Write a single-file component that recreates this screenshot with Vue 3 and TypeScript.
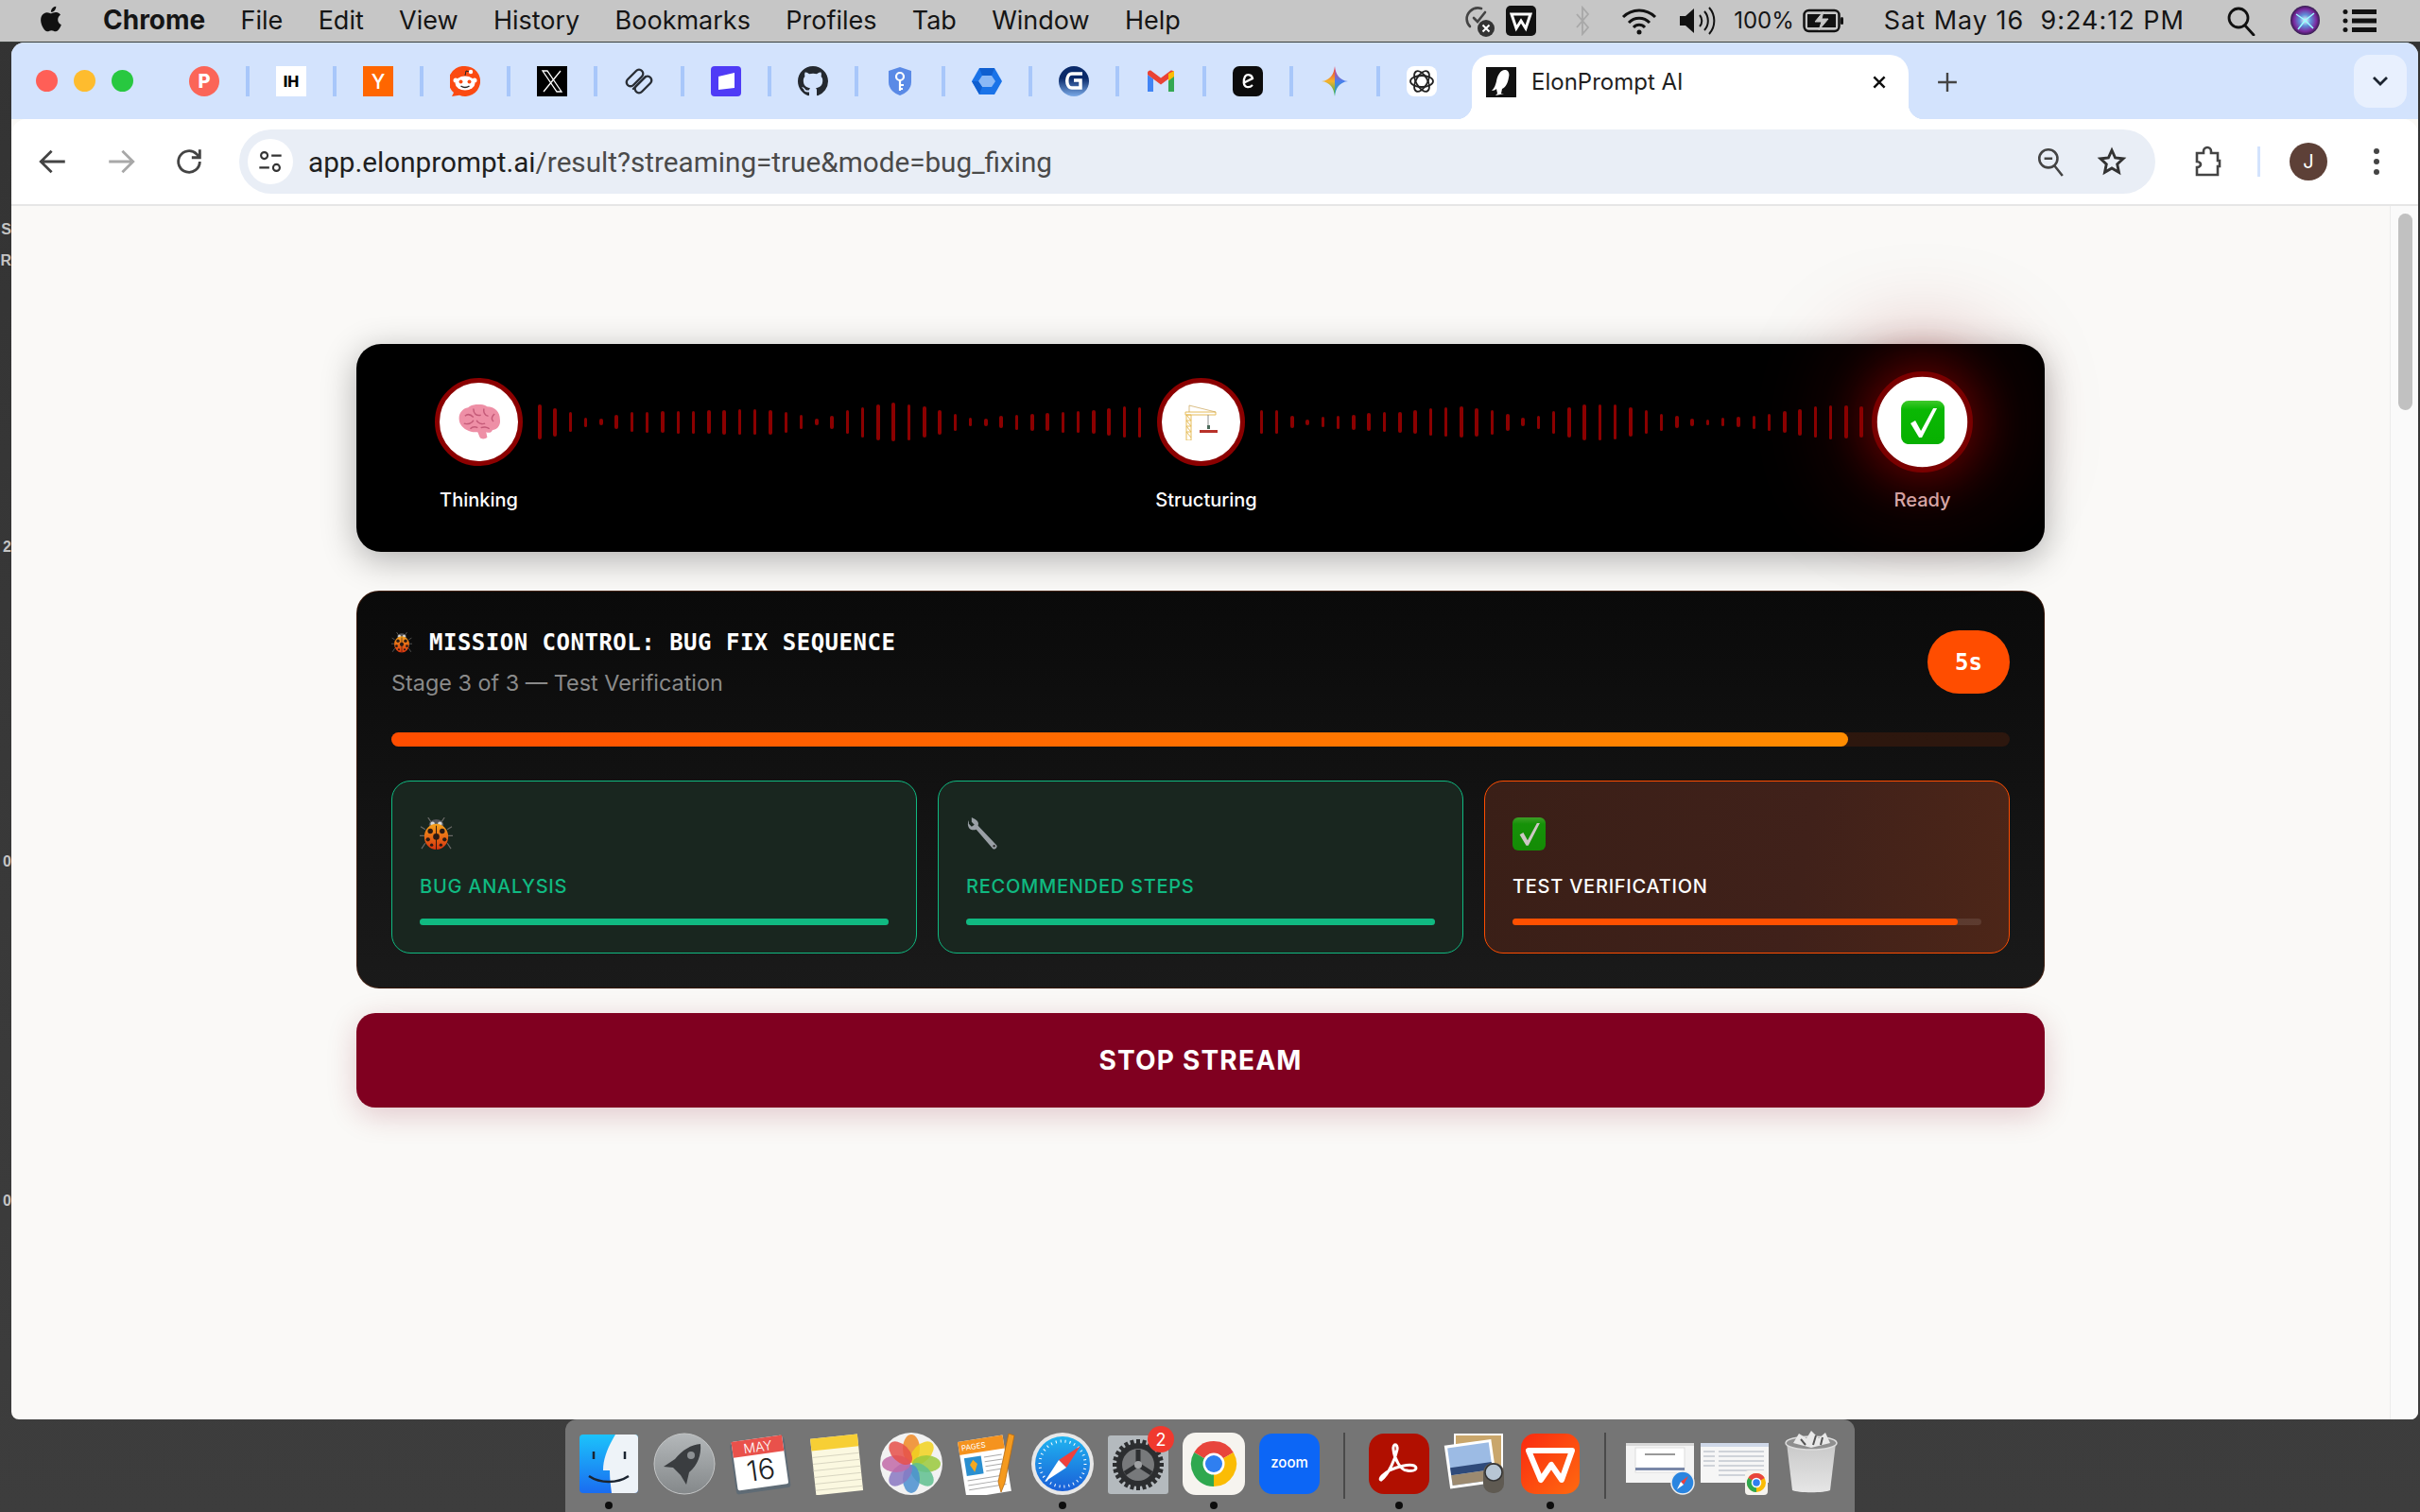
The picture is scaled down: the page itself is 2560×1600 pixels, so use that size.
<script setup lang="ts">
const menuItems = ['File', 'Edit', 'View', 'History', 'Bookmarks', 'Profiles', 'Tab', 'Window', 'Help'];

const waveOne = [37, 30, 21, 10, 7, 15, 21, 22, 23, 24, 24, 25, 26, 27, 27, 26, 22, 15, 7, 14, 25, 32, 38, 41, 38, 33, 26, 18, 9, 8, 13, 16, 18, 19, 22, 23, 25, 29, 33, 32];
const waveTwo = [25, 25, 13, 6, 11, 14, 16, 19, 21, 22, 25, 29, 31, 33, 30, 26, 18, 9, 14, 24, 32, 38, 38, 37, 31, 25, 18, 13, 8, 6, 9, 11, 14, 18, 23, 28, 33, 36, 35, 33];

const petals = [
  { deg: 0, fill: '#f08a24' },
  { deg: 45, fill: '#f2d21f' },
  { deg: 90, fill: '#9ac93c' },
  { deg: 135, fill: '#5fbf8f' },
  { deg: 180, fill: '#4a8fd0' },
  { deg: 225, fill: '#8a78c2' },
  { deg: 270, fill: '#c26aa8' },
  { deg: 315, fill: '#e6504a' },
];

const gearTicks = Array.from({ length: 24 }, (_, i) => i * 15);
</script>

<template>
  <div class="desktop">
    <svg class="sprite" aria-hidden="true">
      <defs>
        <linearGradient id="bugShell" x1="0" y1="0" x2="0" y2="1">
          <stop offset="0" stop-color="#f5a21c" />
          <stop offset="1" stop-color="#d8340f" />
        </linearGradient>
        <linearGradient id="checkFill" x1="0" y1="0" x2="0" y2="1">
          <stop offset="0" stop-color="#3fc92c" />
          <stop offset="0.2" stop-color="#0ab804" />
          <stop offset="1" stop-color="#07b000" />
        </linearGradient>
      </defs>
      <symbol id="bug" viewBox="0 0 36 36">
        <g stroke="#6a6a68" stroke-width="1.2" fill="none">
          <path d="M13 6 9 0M23 6l4-6M6 13l-5-3M30 13l5-3M5 20H0M31 20h5M6 28l-4 6M30 28l4 6" />
        </g>
        <ellipse cx="18" cy="8" rx="8" ry="6" fill="#55565a" />
        <circle cx="14" cy="7" r="2.300" fill="#d8d8d8" />
        <circle cx="22" cy="7" r="2.300" fill="#d8d8d8" />
        <ellipse cx="18" cy="21" rx="13" ry="14" fill="url(#bugShell)" />
        <path d="M18 9v26" stroke="#2a1a14" stroke-width="1" />
        <g fill="#2a1a14">
          <circle cx="11.500" cy="15" r="2.800" />
          <circle cx="24.500" cy="15" r="2.800" />
          <circle cx="18" cy="21" r="3.400" />
          <circle cx="9" cy="24" r="2.200" />
          <circle cx="27" cy="24" r="2.200" />
          <circle cx="13" cy="30" r="1.700" />
          <circle cx="23" cy="30" r="1.700" />
        </g>
      </symbol>
      <symbol id="check" viewBox="0 0 46 46">
        <rect x="0" y="0" width="46" height="46" rx="8" fill="url(#checkFill)" />
        <path d="M10 24l5-3 6 11L34 8h4L22 39h-3z" fill="#fff" />
      </symbol>
    </svg>

    <!-- bits of the window behind -->
    <span class="behind behind-s">S</span>
    <span class="behind behind-r">R</span>
    <span class="behind behind-2">2</span>
    <span class="behind behind-0a">0</span>
    <span class="behind behind-0b">0</span>

    <header class="menubar">
      <svg class="apple" viewBox="0 0 24 24"><path fill="#111" d="M18.71 19.5c-.83 1.24-1.71 2.45-3.05 2.47-1.34.03-1.77-.79-3.29-.79-1.53 0-2 .77-3.27.82-1.31.05-2.3-1.32-3.14-2.53C4.25 17 2.94 12.45 4.7 9.39c.87-1.52 2.43-2.48 4.12-2.51 1.28-.02 2.5.87 3.29.87.78 0 2.26-1.07 3.81-.91.65.03 2.47.26 3.64 1.98-.09.06-2.17 1.28-2.15 3.81.03 3.02 2.65 4.03 2.68 4.04-.03.07-.42 1.44-1.38 2.83M13 3.5c.73-.83 1.94-1.46 2.94-1.5.13 1.17-.34 2.35-1.04 3.19-.69.85-1.83 1.51-2.95 1.42-.15-1.15.41-2.35 1.05-3.11z" /></svg>
      <nav class="menu">
        <strong class="menu-app">Chrome</strong>
        <span v-for="item in menuItems" :key="item">{{ item }}</span>
      </nav>
      <div class="status">
        <svg class="st-check" viewBox="0 0 34 36" fill="none" stroke="#444" stroke-width="2.6">
          <path d="M19 5a12 12 0 0 0-12 3C2 13 3 20 7 24" stroke-linecap="round" />
          <path d="M11 15l4 4 8-10" stroke-linecap="round" />
          <circle cx="24" cy="26" r="9" fill="#333" stroke="none" />
          <path d="M20.500 22.500l7 7M27.500 22.500l-7 7" stroke="#fff" stroke-width="2" />
        </svg>
        <svg class="st-wps" viewBox="0 0 32 32">
          <rect width="32" height="32" rx="5" fill="#111" />
          <path d="M6 9h20l-5 15-5-8-5 8z" fill="none" stroke="#fff" stroke-width="3" />
        </svg>
        <svg class="st-bt" viewBox="0 0 18 32" fill="none" stroke="#a8a8a8" stroke-width="1.800"><path d="M3 9l12 14-6 7V2l6 7L3 23" /></svg>
        <svg class="st-wifi" viewBox="0 0 40 30" fill="none" stroke="#111" stroke-width="3">
          <path d="M3 11a24 24 0 0 1 34 0M9 17a15 15 0 0 1 22 0M14 22a8 8 0 0 1 12 0" />
          <circle cx="20" cy="27" r="2.500" fill="#111" stroke="none" />
        </svg>
        <svg class="st-vol" viewBox="0 0 41 32">
          <path d="M2 11h6l9-8v26l-9-8H2z" fill="#111" />
          <path d="M23 10a9 9 0 0 1 0 12M28 6a15 15 0 0 1 0 20M33 2a21 21 0 0 1 0 28" fill="none" stroke="#111" stroke-width="2" />
        </svg>
        <span class="st-pct">100%</span>
        <svg class="st-batt" viewBox="0 0 44 26">
          <rect x="1.500" y="2" width="37" height="22" rx="5" fill="none" stroke="#111" stroke-width="2.500" />
          <rect x="40" y="9" width="3" height="8" rx="1.500" fill="#111" />
          <path d="M5 6h30v14H5z" fill="#111" />
          <path d="M22 3 13 14h7l-3 9 10-12h-7z" fill="#c6c6c6" stroke="#c6c6c6" />
        </svg>
        <span class="st-date">Sat May 16&nbsp;&nbsp;9:24:12 PM</span>
        <svg class="st-search" viewBox="0 0 31 32" fill="none" stroke="#111" stroke-width="2.800">
          <circle cx="13" cy="13" r="10" />
          <path d="M20 21l9 10" stroke-linecap="round" />
        </svg>
        <svg class="st-siri" viewBox="0 0 31 31">
          <defs>
            <radialGradient id="siriBg" cx="0.5" cy="0.5" r="0.55">
              <stop offset="0" stop-color="#f1f7ff" />
              <stop offset="0.35" stop-color="#5f8fd8" />
              <stop offset="0.7" stop-color="#7a2aa0" />
              <stop offset="1" stop-color="#16162a" />
            </radialGradient>
          </defs>
          <circle cx="15.500" cy="15.500" r="15.500" fill="url(#siriBg)" />
          <path d="M15.500 15.500 6 9M15.500 15.500 25 8M15.500 15.500 8 25M15.500 15.500 24 24" stroke="#9ff" stroke-width="1.500" />
        </svg>
        <svg class="st-list" viewBox="0 0 36 26" fill="#111">
          <circle cx="3" cy="3.500" r="2.500" /><rect x="10" y="1" width="26" height="5" />
          <circle cx="3" cy="13" r="2.500" /><rect x="10" y="10.500" width="26" height="5" />
          <circle cx="3" cy="22.500" r="2.500" /><rect x="10" y="20" width="26" height="5" />
        </svg>
      </div>
    </header>

    <div class="window">
      <div class="tabstrip">
        <div class="lights">
          <i class="light red"></i>
          <i class="light yellow"></i>
          <i class="light green"></i>
        </div>
        <div class="pinned">
          <div class="fav">
            <svg viewBox="0 0 32 32"><circle cx="16" cy="16" r="16" fill="#fb6558" /><text x="16" y="23" class="fav-text" font-size="20" fill="#fff">P</text></svg>
          </div>
          <div class="fav">
            <svg viewBox="0 0 32 32"><rect width="32" height="32" fill="#fff" /><text x="16" y="22" class="fav-text" font-size="16" fill="#000">IH</text></svg>
          </div>
          <div class="fav">
            <svg viewBox="0 0 32 32"><rect width="32" height="32" fill="#ff6600" /><text x="16" y="24" class="fav-text fav-thin" font-size="21" fill="#fff">Y</text></svg>
          </div>
          <div class="fav">
            <svg viewBox="0 0 32 32">
              <path d="M16 0a16 16 0 1 1-6 30.800L2 32l2-4A16 16 0 0 1 16 0z" fill="#fb4a12" />
              <ellipse cx="16" cy="18" rx="10.500" ry="7.500" fill="#fff" />
              <circle cx="6" cy="15" r="2.500" fill="#fff" /><circle cx="26" cy="15" r="2.500" fill="#fff" />
              <circle cx="11.500" cy="16.500" r="2" fill="#fb4a12" /><circle cx="20.500" cy="16.500" r="2" fill="#fb4a12" />
              <path d="M11.500 21q4.500 3 9 0" stroke="#222" stroke-width="1.500" fill="none" />
              <path d="M16 10l1-5 4 1" stroke="#222" stroke-width="1" fill="none" /><circle cx="22" cy="6" r="2.200" fill="#fff" />
            </svg>
          </div>
          <div class="fav">
            <svg viewBox="0 0 32 32">
              <rect width="32" height="32" fill="#000" />
              <path d="M6 5h5l15 22h-5zM25 5 7 27" fill="none" stroke="#fff" stroke-width="1.300" />
            </svg>
          </div>
          <div class="fav">
            <svg viewBox="0 0 32 32" fill="none" stroke="#2a2f36" stroke-width="2.400" stroke-linecap="round">
              <path d="M4 14 13 5a4.200 4.200 0 0 1 6 6l-9 9a4 4 0 0 1-6-6zM10 24l13-13" />
              <path d="M28 18l-9 9a4.200 4.200 0 0 1-6-6l9-9a4 4 0 0 1 6 6z" />
            </svg>
          </div>
          <div class="fav">
            <svg viewBox="0 0 32 32"><rect width="32" height="32" rx="4" fill="#4f3bf6" /><path d="M8 11l17-4v16l-17 2z" fill="#fff" /></svg>
          </div>
          <div class="fav">
            <svg viewBox="0 0 16 16"><path fill="#24292f" d="M8 0C3.580 0 0 3.580 0 8c0 3.540 2.290 6.530 5.470 7.590.4.070.55-.17.55-.38 0-.19-.01-.82-.01-1.490-2.010.37-2.530-.49-2.690-.94-.09-.23-.48-.94-.82-1.130-.28-.15-.68-.52-.01-.53.63-.01 1.080.58 1.230.82.72 1.210 1.870.87 2.330.66.07-.52.28-.87.51-1.070-1.780-.2-3.640-.89-3.640-3.950 0-.87.31-1.590.82-2.150-.08-.2-.36-1.020.08-2.120 0 0 .67-.21 2.200.82.64-.18 1.320-.27 2-.27.68 0 1.360.09 2 .27 1.530-1.040 2.200-.82 2.200-.82.44 1.100.16 1.920.08 2.120.51.56.82 1.270.82 2.150 0 3.070-1.870 3.750-3.650 3.950.29.25.54.73.54 1.480 0 1.070-.01 1.930-.01 2.200 0 .21.15.46.55.38A8.013 8.013 0 0 0 16 8c0-4.420-3.580-8-8-8z" /></svg>
          </div>
          <div class="fav">
            <svg viewBox="0 0 32 32">
              <path d="M16 1l12 4v12c0 7-6 12-12 14C10 29 4 24 4 17V5z" fill="#5a8ae6" />
              <circle cx="16" cy="11" r="4" fill="none" stroke="#fff" stroke-width="2.200" />
              <path d="M16 15v11M16 20h4M16 24h3" stroke="#fff" stroke-width="2.200" />
            </svg>
          </div>
          <div class="fav">
            <svg viewBox="0 0 32 32">
              <path d="M8 2h16l8 14-8 14H8L0 16z" fill="#1a73e8" />
              <path d="M11 10h10l4 6-4 6H11l-4-6z" fill="#8ab8f6" />
              <path d="M8 2h16l-3 8H11zM0 16h7l4 6-3 8z" fill="#0f5fd0" />
            </svg>
          </div>
          <div class="fav">
            <svg viewBox="0 0 32 32">
              <defs>
                <linearGradient id="favG" x1="0" y1="0" x2="0" y2="1">
                  <stop offset="0.4" stop-color="#0a2a6a" />
                  <stop offset="1" stop-color="#7aaae8" />
                </linearGradient>
              </defs>
              <circle cx="16" cy="16" r="16" fill="url(#favG)" />
              <path d="M25 8H14c-7 0-7 15 0 15h9v-8h-7" fill="none" stroke="#fff" stroke-width="3.500" />
            </svg>
          </div>
          <div class="fav">
            <svg viewBox="0 0 32 32">
              <path d="M2 27V9l6 4.500V27z" fill="#4285f4" />
              <path d="M24 27V13.500L30 9v18z" fill="#34a853" />
              <path d="M2 9l14 10.500L30 9v-2c0-2-2.500-3-4-2L16 12.500 6 5C4.500 4 2 5 2 7z" fill="#ea4335" />
              <path d="M24 8l6-3v6l-6 4.500z" fill="#fbbc04" />
            </svg>
          </div>
          <div class="fav">
            <svg viewBox="0 0 32 32">
              <rect width="32" height="32" rx="7" fill="#0c0c0c" />
              <path d="M11 18 21 13a4.500 4.500 0 0 0-8-2c-2 4-2 10 2 11 2 .5 4 0 6-2" fill="none" stroke="#fff" stroke-width="2.300" />
            </svg>
          </div>
          <div class="fav">
            <svg viewBox="0 0 32 32">
              <defs>
                <linearGradient id="gemLeft" x1="0" y1="0" x2="0" y2="1">
                  <stop offset="0.1" stop-color="#e8453c" />
                  <stop offset="0.5" stop-color="#f6b32a" />
                  <stop offset="0.9" stop-color="#3fae5a" />
                </linearGradient>
                <linearGradient id="gemRight" x1="0" y1="0" x2="0" y2="1">
                  <stop offset="0.1" stop-color="#d8457c" />
                  <stop offset="0.5" stop-color="#4a7ff0" />
                  <stop offset="0.9" stop-color="#2fa89a" />
                </linearGradient>
              </defs>
              <path d="M16 0c-1 9-5 15-14 16 9 1 13 7 14 16z" fill="url(#gemLeft)" />
              <path d="M16 0c1 9 5 15 14 16-9 1-13 7-14 16z" fill="url(#gemRight)" />
            </svg>
          </div>
          <div class="fav fav-last">
            <svg viewBox="0 0 32 32">
              <rect width="32" height="32" rx="8" fill="#fff" />
              <g fill="none" stroke="#222" stroke-width="1.800">
                <ellipse cx="16" cy="16" rx="12" ry="6" />
                <ellipse cx="16" cy="16" rx="12" ry="6" transform="rotate(60 16 16)" />
                <ellipse cx="16" cy="16" rx="12" ry="6" transform="rotate(120 16 16)" />
              </g>
            </svg>
          </div>
        </div>

        <div class="tab">
          <svg class="tab-icon" viewBox="0 0 32 32">
            <rect width="32" height="32" fill="#111" />
            <path d="M21 3c3 1 4 4 3 8-1 6-3 10-7 12l-1 5h3l-4 1-5 1 2-2-1-5c-1 1-3 2-5 2 3-3 4-6 5-10 1-7 5-13 10-12z" fill="#fff" />
          </svg>
          <span class="tab-title">ElonPrompt AI</span>
          <svg class="tab-close" viewBox="0 0 16 16" fill="none" stroke="#111" stroke-width="2.200"><path d="M3 3l10 10M13 3 3 13" /></svg>
        </div>
        <svg class="tab-new" viewBox="0 0 20 20" fill="none" stroke="#444" stroke-width="2.200"><path d="M10 1v18M1 10h18" /></svg>
        <div class="tab-search">
          <svg viewBox="0 0 18 12" fill="none" stroke="#1c2430" stroke-width="2.800"><path d="M2 2l7 7 7-7" /></svg>
        </div>
      </div>

      <div class="toolbar">
        <div class="nav-btn">
          <svg viewBox="0 0 24 24" fill="none" stroke="#444" stroke-width="2"><path d="M21 12H4M11 4l-8 8 8 8" /></svg>
        </div>
        <div class="nav-btn">
          <svg viewBox="0 0 24 24" fill="none" stroke="#a8a8a8" stroke-width="2"><path d="M3 12h17M13 4l8 8-8 8" /></svg>
        </div>
        <div class="nav-btn">
          <svg viewBox="0 0 24 24" fill="none" stroke="#444" stroke-width="2"><path d="M20 12a8 8 0 1 1-2.400-5.700L20 9M20 3v6h-6" /></svg>
        </div>
        <div class="omnibox">
          <div class="tune">
            <svg viewBox="0 0 24 24" fill="none" stroke="#333" stroke-width="1.800">
              <circle cx="6.500" cy="6.500" r="3" /><path d="M13 6.500h9M2 17.500h9" /><circle cx="17.500" cy="17.500" r="3" />
            </svg>
          </div>
          <span class="url"><span class="url-host">app.elonprompt.ai</span>/result?streaming=true&amp;mode=bug_fixing</span>
          <svg class="omni-zoom" viewBox="0 0 28 30" fill="none" stroke="#444" stroke-width="2.400">
            <circle cx="12" cy="12" r="9" /><path d="M8 12h8M18 19l8 10" />
          </svg>
          <svg class="omni-star" viewBox="0 0 24 24" fill="none" stroke="#333" stroke-width="2.200"><path d="M12 3l2.700 6 6.300.7-4.700 4.300 1.300 6.500L12 17.200 6.400 20.500 7.700 14 3 9.700 9.300 9z" /></svg>
        </div>
        <svg class="ext" viewBox="0 0 30 34" fill="none" stroke="#444" stroke-width="2.600">
          <path d="M4 8h7V6a4 4 0 0 1 8 0v2h7v8h2v6h-2v9H4v-8c3 0 4-2 4-3s-1-3-4-3z" />
        </svg>
        <i class="tool-sep"></i>
        <div class="avatar">J</div>
        <div class="kebab"><i></i><i></i><i></i></div>
      </div>

      <div class="viewport">
        <main class="page">
          <section class="stepper">
            <div class="step">
              <div class="step-circle">
                <svg class="brain" viewBox="0 0 41 33">
                  <path d="M3 19C-1 12 3 4 10 3c4-4 14-4 18-1 7 0 12 5 12 12 1 6-3 10-7 10-1 3-4 3-6 2l1 5c-2 2-6 2-7 0l-2-5c-6 1-13-2-16-7z" fill="#ee8fa6" />
                  <path d="M7 11c3-3 6-1 8 1M15 4c0 5 3 7 7 6M25 4c-1 3 1 7 4 7M35 9c-2 1-4 5-1 7M6 18c3 1 8 0 9-3M18 15c1 3 5 4 8 3M30 23c-2-2-6-2-8-1M12 23c2-2 5-2 7-1" fill="none" stroke="#c45a78" stroke-width="1.300" />
                </svg>
              </div>
              <span class="step-label">Thinking</span>
            </div>
            <div class="wave"><i v-for="(h, i) in waveOne" :key="i" :style="{ height: `${h}px` }"></i></div>
            <div class="step">
              <div class="step-circle">
                <svg class="crane" viewBox="0 0 36 38">
                  <g fill="none" stroke="#e6bc58" stroke-width="1">
                    <path d="M2 8h32v3H2zM3 11v27h5V11zM3 17h5M3 23h5M3 29h5M3 11l5 6M3 17l5 6M3 23l5 6M3 29l5 6" />
                    <path d="M6 1v7M6 1l28 7" stroke="#c8a050" stroke-width="0.700" />
                  </g>
                  <path d="M26 11v14" stroke="#777" stroke-width="0.800" />
                  <rect x="25" y="22" width="3" height="4" fill="#4a6a5a" />
                  <rect x="17" y="27" width="19" height="3" fill="#b8322a" />
                </svg>
              </div>
              <span class="step-label step-label-shift">Structuring</span>
            </div>
            <div class="wave"><i v-for="(h, i) in waveTwo" :key="i" :style="{ height: `${h}px` }"></i></div>
            <div class="step">
              <div class="step-circle step-circle-active">
                <svg class="ready-check"><use href="#check" /></svg>
              </div>
              <span class="step-label step-label-ready">Ready</span>
            </div>
          </section>

          <section class="mission">
            <div class="mission-head">
              <div>
                <h1 class="mission-title"><svg class="title-bug"><use href="#bug" /></svg>MISSION CONTROL: BUG FIX SEQUENCE</h1>
                <p class="mission-sub">Stage 3 of 3 — Test Verification</p>
              </div>
              <div class="timer">5s</div>
            </div>
            <div class="progress"><div class="progress-fill" :style="{ width: '90%' }"></div></div>
            <div class="cards">
              <div class="card">
                <svg class="card-icon"><use href="#bug" /></svg>
                <div class="card-label">BUG ANALYSIS</div>
                <div class="card-track"><div class="card-fill" :style="{ width: '100%' }"></div></div>
              </div>
              <div class="card">
                <svg class="card-icon" viewBox="0 0 36 36">
                  <path d="M3 3c-2 4-1 8 2 10 2 1 4 1 6 0l18 21c2 2 6-2 4-4L13 9c1-3 0-5-3-7L6 0v5l3 3-3 2-3-3z" fill="#9aa0a6" />
                  <circle cx="30.500" cy="31" r="1.300" fill="#333" />
                </svg>
                <div class="card-label">RECOMMENDED STEPS</div>
                <div class="card-track"><div class="card-fill" :style="{ width: '100%' }"></div></div>
              </div>
              <div class="card card-active">
                <svg class="card-icon card-icon-dim"><use href="#check" /></svg>
                <div class="card-label">TEST VERIFICATION</div>
                <div class="card-track"><div class="card-fill" :style="{ width: '95%' }"></div></div>
              </div>
            </div>
          </section>

          <button class="stop" type="button">STOP STREAM</button>
        </main>
        <div class="scrollbar"><div class="scroll-thumb"></div></div>
      </div>
    </div>

    <footer class="dock">
      <div class="dock-item">
        <svg viewBox="0 0 66 66">
          <defs>
            <linearGradient id="finderBlue" x1="0" y1="0" x2="0" y2="1">
              <stop offset="0" stop-color="#1cc3fb" />
              <stop offset="1" stop-color="#1a6cf0" />
            </linearGradient>
          </defs>
          <rect x="2" y="2" width="62" height="62" rx="4" fill="url(#finderBlue)" />
          <path d="M40 2h20a4 4 0 0 1 4 4v54a4 4 0 0 1-4 4H36c-1-8-2-15-2-24h-7c0-14 6-26 13-38z" fill="#eef3f8" />
          <path d="M17 20v8M50 20v8" stroke="#1b2430" stroke-width="2.500" />
          <path d="M12 46c12 8 30 8 42 0" fill="none" stroke="#1b2430" stroke-width="2.500" />
        </svg>
        <i class="dot"></i>
      </div>
      <div class="dock-item">
        <svg viewBox="0 0 66 66">
          <defs>
            <linearGradient id="rocketBg" x1="0" y1="0" x2="0" y2="1">
              <stop offset="0" stop-color="#b4b8ba" />
              <stop offset="1" stop-color="#84888a" />
            </linearGradient>
          </defs>
          <circle cx="33" cy="33" r="32" fill="url(#rocketBg)" stroke="#c4c6c7" />
          <path d="M50 12c1 12-3 22-12 30l-3 13-6-10-8-8-10-1 12-8c8-10 17-15 27-16z" fill="#3a3d40" />
          <circle cx="40" cy="24" r="4" fill="#8c9093" />
        </svg>
        <i class="dot dot-off"></i>
      </div>
      <div class="dock-item">
        <svg viewBox="0 0 66 66">
          <g transform="rotate(-8 33 33)">
            <rect x="4" y="8" width="58" height="54" rx="3" fill="#5f6b75" />
            <rect x="6" y="6" width="54" height="52" rx="2" fill="#fff" />
            <rect x="6" y="6" width="54" height="17" fill="#e9514b" />
            <text x="33" y="20" class="dock-text dock-light" font-size="14" fill="#fff">MAY</text>
            <text x="33" y="50" class="dock-text dock-light" font-size="30" fill="#222">16</text>
          </g>
        </svg>
        <i class="dot dot-off"></i>
      </div>
      <div class="dock-item">
        <svg viewBox="0 0 66 66">
          <g transform="rotate(-6 33 33)">
            <rect x="9" y="4" width="50" height="60" fill="#fbf8e0" />
            <rect x="9" y="4" width="50" height="13" fill="#f7cf35" />
            <path d="M9 24h50M9 31h50M9 38h50M9 45h50M9 52h50M9 59h50" stroke="#d8d5c0" stroke-width="1" />
          </g>
        </svg>
        <i class="dot dot-off"></i>
      </div>
      <div class="dock-item">
        <svg viewBox="0 0 66 66">
          <circle cx="33" cy="33" r="33" fill="#f2f2f2" />
          <ellipse v-for="p in petals" :key="p.deg" cx="33" cy="17" rx="9" ry="15" :fill="p.fill" opacity="0.85" :transform="`rotate(${p.deg} 33 33)`" />
        </svg>
        <i class="dot dot-off"></i>
      </div>
      <div class="dock-item">
        <svg viewBox="0 0 66 66">
          <g transform="rotate(-9 30 33)">
            <rect x="6" y="6" width="48" height="60" fill="#fff" />
            <rect x="6" y="6" width="48" height="14" fill="#f5931e" />
            <text x="9" y="16" font-size="8" fill="#fff" class="dock-plain">PAGES</text>
            <rect x="10" y="24" width="18" height="19" fill="#2a8fd0" />
            <path d="M19 27l4 5-4 8-4-8z" fill="#f5a81e" />
            <path d="M31 26h19M31 31h19M31 36h19M31 41h19M10 48h40M10 53h40M10 58h40" stroke="#aaa" stroke-width="1" />
          </g>
          <path d="M56 1l6 2-10 50-4 10-3-11z" fill="#f59a1e" stroke="#b56a10" stroke-width="0.800" />
        </svg>
        <i class="dot dot-off"></i>
      </div>
      <div class="dock-item">
        <svg viewBox="0 0 66 66">
          <defs>
            <linearGradient id="safBlue" x1="0" y1="0" x2="0" y2="1">
              <stop offset="0" stop-color="#20b4f0" />
              <stop offset="1" stop-color="#1a5fd8" />
            </linearGradient>
          </defs>
          <circle cx="33" cy="33" r="33" fill="#e8e8e8" />
          <circle cx="33" cy="33" r="29" fill="url(#safBlue)" />
          <circle cx="33" cy="33" r="24" fill="none" stroke="#fff" stroke-width="3" stroke-dasharray="1 4" />
          <path d="M52 14 37 37 29 29z" fill="#f0403c" />
          <path d="M14 52 29 29 37 37z" fill="#fff" />
        </svg>
        <i class="dot"></i>
      </div>
      <div class="dock-item">
        <svg viewBox="0 0 66 66">
          <rect x="1" y="3" width="64" height="62" rx="3" fill="#b4babe" />
          <circle cx="33" cy="34" r="23" fill="#2c2e30" />
          <rect v-for="d in gearTicks" :key="d" x="31" y="7" width="4" height="7" fill="#2c2e30" :transform="`rotate(${d} 33 34)`" />
          <circle cx="33" cy="34" r="17" fill="#77797b" />
          <path d="M33 34V18M33 34 19 43M33 34l14 9" stroke="#2c2e30" stroke-width="5" />
          <circle cx="33" cy="34" r="4" fill="#a0a2a4" />
        </svg>
        <span class="dock-badge">2</span>
        <i class="dot dot-off"></i>
      </div>
      <div class="dock-item">
        <svg viewBox="0 0 66 66">
          <rect x="0" y="0" width="66" height="66" rx="14" fill="#f6f4ef" />
          <path d="M33 33 12.200 21A24 24 0 0 1 53.800 21z" fill="#e8453c" />
          <path d="M33 33 53.800 21A24 24 0 0 1 33 57z" fill="#fbbc04" />
          <path d="M33 33V57A24 24 0 0 1 12.200 21z" fill="#2fa84f" />
          <circle cx="33" cy="33" r="11.500" fill="#fff" />
          <circle cx="33" cy="33" r="9" fill="#2f7ff0" />
        </svg>
        <i class="dot"></i>
      </div>
      <div class="dock-item">
        <svg viewBox="0 0 66 66">
          <rect x="1" y="1" width="64" height="64" rx="14" fill="#0c66f6" />
          <text x="33" y="37" class="dock-text" font-size="15" fill="#fff">zoom</text>
        </svg>
        <i class="dot dot-off"></i>
      </div>
      <i class="dock-sep"></i>
      <div class="dock-item">
        <svg viewBox="0 0 66 66">
          <rect x="1" y="1" width="64" height="64" rx="16" fill="#b10f00" />
          <path d="M14 50c8-6 15-22 17-32 1-7-5-7-4 0 1 10 8 22 14 22 8 2 13-2 8-5-6-2-18 1-26 5-6 3-12 9-9 10z" fill="none" stroke="#fff" stroke-width="3" />
        </svg>
        <i class="dot"></i>
      </div>
      <div class="dock-item">
        <svg viewBox="0 0 66 66">
          <rect x="12" y="2" width="50" height="44" fill="#c9a66b" stroke="#fff" stroke-width="2" />
          <g transform="rotate(-8 30 35)">
            <rect x="4" y="10" width="50" height="46" fill="#fff" />
            <rect x="7" y="13" width="44" height="40" fill="#9cbbe4" />
            <path d="M7 34h44v8H7z" fill="#2f4a7a" />
            <path d="M7 42h44v11H7z" fill="#9c8a70" />
          </g>
          <rect x="42" y="32" width="22" height="32" rx="10" fill="#5f5a52" />
          <circle cx="53" cy="42" r="9" fill="#b7c6d4" stroke="#333" stroke-width="1.500" />
        </svg>
        <i class="dot dot-off"></i>
      </div>
      <div class="dock-item">
        <svg viewBox="0 0 66 66">
          <defs>
            <linearGradient id="wpsRed" x1="0" y1="0" x2="1" y2="1">
              <stop offset="0" stop-color="#fa2a10" />
              <stop offset="1" stop-color="#ff6a10" />
            </linearGradient>
          </defs>
          <rect x="2" y="1" width="62" height="64" rx="15" fill="url(#wpsRed)" />
          <path d="M10 19h46L45 50 34 34 23 50z" fill="none" stroke="#fff" stroke-width="6" stroke-linejoin="round" />
        </svg>
        <i class="dot"></i>
      </div>
      <i class="dock-sep"></i>
      <div class="dock-item">
        <svg class="wide" viewBox="0 0 80 66">
          <rect x="4" y="11" width="72" height="42" fill="#f4f4f4" />
          <rect x="4" y="11" width="72" height="3" fill="#d8d8d8" />
          <rect x="14" y="16" width="52" height="26" fill="#fff" stroke="#ddd" />
          <rect x="24" y="22" width="32" height="2" fill="#999" />
          <rect x="14" y="37" width="52" height="3" fill="#7a88a8" />
          <circle cx="64" cy="53" r="12" fill="#2a85e0" stroke="#eee" stroke-width="1.500" />
          <path d="M70 46l-5 9-3-3z" fill="#f0403c" /><path d="M58 60l4-8 3 3z" fill="#fff" />
        </svg>
        <i class="dot dot-off"></i>
      </div>
      <div class="dock-item">
        <svg class="wide" viewBox="0 0 80 66">
          <rect x="3" y="11" width="72" height="42" fill="#f6f6f6" />
          <rect x="3" y="11" width="72" height="4" fill="#cfd8e8" />
          <path d="M6 20h12M6 25h12M6 30h12M6 35h12M22 20h48M22 25h48M22 30h48M22 35h48M22 40h48M22 45h48" stroke="#a8b0bc" stroke-width="1.200" />
          <rect x="50" y="40" width="24" height="26" rx="4" fill="#f6f4ef" />
          <circle cx="62" cy="53" r="10" fill="#fbbc04" />
          <path d="M62 53 53.300 48A10 10 0 0 1 70.700 48z" fill="#e8453c" />
          <path d="M62 53v10A10 10 0 0 1 53.300 48z" fill="#2fa84f" />
          <circle cx="62" cy="53" r="4.500" fill="#2f7ff0" stroke="#fff" stroke-width="1.500" />
        </svg>
        <i class="dot dot-off"></i>
      </div>
      <div class="dock-item dock-trash">
        <svg viewBox="0 0 66 70">
          <defs>
            <linearGradient id="trashBody" x1="0" y1="0" x2="0" y2="1">
              <stop offset="0" stop-color="#c8c8c8" />
              <stop offset="1" stop-color="#e6e6e6" />
            </linearGradient>
          </defs>
          <path d="M7 16h52l-6 50c-6 3-34 3-40 0z" fill="url(#trashBody)" />
          <ellipse cx="33" cy="16" rx="27" ry="7" fill="#8f8f8f" stroke="#ddd" stroke-width="1.500" />
          <path d="M14 16l6-10 8 5 5-8 8 8 7-6 5 11-20 5z" fill="#e8e8e8" />
          <path d="M22 12l5 6M38 8l-3 10M45 10l-2 8" stroke="#555" stroke-width="2" />
        </svg>
      </div>
    </footer>
  </div>
</template>

<style>
html,
body {
  margin: 0;
  background: #3c3c3c;
}
</style>

<style scoped>
.desktop {
  position: relative;
  width: 2560px;
  height: 1600px;
  display: flex;
  flex-direction: column;
  overflow: hidden;
  background: linear-gradient(180deg, #333 0%, #3d3d3d 100%);
  font-family: Inter, "Liberation Sans", sans-serif;
}

.sprite {
  position: absolute;
  width: 0;
  height: 0;
}

.behind {
  position: absolute;
  left: 0;
  width: 12px;
  text-align: right;
  font: 700 16px/22px "Liberation Sans", sans-serif;
  color: #c4c4c4;
}
.behind-s { top: 232px; }
.behind-r { top: 265px; }
.behind-2 { top: 568px; }
.behind-0a { top: 901px; }
.behind-0b { top: 1260px; }

/* menu bar */
.menubar {
  flex: none;
  height: 45px;
  box-sizing: border-box;
  padding: 0 46px 1px 38px;
  display: flex;
  align-items: center;
  background: #c6c6c6;
  border-bottom: 1px solid #3a3f3c;
  color: #151515;
  font-size: 27px;
}

.apple {
  width: 32px;
  height: 34px;
  margin-top: -4px;
}

.menu {
  display: flex;
  gap: 37.300px;
  margin-left: 39px;
}

.menu-app {
  font-size: 28px;
  line-height: 32px;
  font-weight: 700;
}

.status {
  margin-left: auto;
  display: flex;
  align-items: center;
}

.st-check { width: 34px; height: 36px; }
.st-wps { width: 32px; height: 32px; margin-left: 11px; }
.st-bt { width: 18px; height: 32px; margin-left: 40px; }
.st-wifi { width: 40px; height: 30px; margin-left: 31px; }
.st-vol { width: 41px; height: 32px; margin-left: 21px; }
.st-pct { margin-left: 18px; font-size: 24px; }
.st-batt { width: 44px; height: 26px; margin-left: 9px; }
.st-date { margin-left: 42px; letter-spacing: 1px; }
.st-search { width: 31px; height: 32px; margin-left: 44px; }
.st-siri { width: 31px; height: 31px; margin-left: 37px; }
.st-list { width: 36px; height: 26px; margin-left: 24px; }

/* browser window */
.window {
  flex: none;
  height: 1457px;
  margin: 0 2px 0 12px;
  display: flex;
  flex-direction: column;
  border-radius: 14px 14px 8px 8px;
  overflow: hidden;
  background: #faf9f7;
}

.tabstrip {
  flex: none;
  height: 81px;
  display: flex;
  align-items: flex-start;
  padding-top: 13px;
  box-sizing: border-box;
  background: #d3e3fd;
}

.lights {
  display: flex;
  gap: 17px;
  margin: 16px 0 0 26px;
}

.light {
  width: 23px;
  height: 23px;
  border-radius: 50%;
}
.light.red { background: #ff5f57; }
.light.yellow { background: #febc2e; }
.light.green { background: #28c840; }

.pinned {
  display: flex;
  margin: 12px 0 0 31px;
}

.fav {
  width: 92px;
  height: 32px;
  box-sizing: border-box;
  display: flex;
  justify-content: center;
  border-right: 4px solid #a8c7fa;
}

.fav svg {
  width: 32px;
  height: 32px;
  display: block;
}

.fav-last {
  border-right-color: transparent;
}

.fav-text {
  font-family: Inter, sans-serif;
  font-weight: 800;
  text-anchor: middle;
}

.fav-thin {
  font-weight: 500;
}

.tab {
  position: relative;
  flex: none;
  width: 462px;
  height: 68px;
  margin-left: 5px;
  box-sizing: border-box;
  padding-left: 15px;
  display: flex;
  align-items: center;
  background: #fff;
  border-radius: 20px 20px 0 0;
}

.tab::before,
.tab::after {
  content: "";
  position: absolute;
  bottom: 0;
  width: 16px;
  height: 16px;
}

.tab::before {
  left: -16px;
  background: radial-gradient(circle at 0 0, transparent 16px, #fff 16.500px);
}

.tab::after {
  right: -16px;
  background: radial-gradient(circle at 100% 0, transparent 16px, #fff 16.500px);
}

.tab-icon {
  width: 32px;
  height: 32px;
  margin-top: -10px;
}

.tab-title {
  margin: -12px 0 0 16px;
  font-size: 24px;
  color: #1f1f1f;
}

.tab-close {
  width: 18px;
  height: 18px;
  margin: -10px 22px 0 auto;
}

.tab-new {
  width: 22px;
  height: 22px;
  margin: 18px 0 0 30px;
}

.tab-search {
  width: 56px;
  height: 56px;
  margin-left: auto;
  margin-right: 12px;
  border-radius: 16px;
  background: #e8f0fe;
  display: flex;
  align-items: center;
  justify-content: center;
}

.tab-search svg {
  width: 18px;
  height: 12px;
}

.toolbar {
  flex: none;
  height: 92px;
  box-sizing: border-box;
  padding-left: 8px;
  display: flex;
  align-items: center;
  background: #fff;
  border-bottom: 2px solid #e6e6e6;
  border-radius: 16px 16px 0 0;
}

.nav-btn {
  width: 72px;
  display: flex;
  justify-content: center;
}

.nav-btn svg {
  width: 34px;
  height: 34px;
}

.omnibox {
  flex: none;
  width: 2027px;
  height: 68px;
  margin-left: 17px;
  box-sizing: border-box;
  padding: 0 30px 0 9px;
  display: flex;
  align-items: center;
  background: #e9eef6;
  border-radius: 34px;
}

.tune {
  width: 48px;
  height: 48px;
  border-radius: 50%;
  background: #fff;
  display: flex;
  align-items: center;
  justify-content: center;
}

.tune svg {
  width: 28px;
  height: 28px;
}

.url {
  margin-left: 16px;
  font-family: Roboto, sans-serif;
  font-size: 29.700px;
  color: #4a4a4a;
}

.url-host {
  color: #1f1f1f;
}

.omni-zoom {
  width: 30px;
  height: 32px;
  margin-left: auto;
}

.omni-star {
  width: 32px;
  height: 32px;
  margin-left: 34px;
}

.ext {
  width: 30px;
  height: 34px;
  margin-left: 40px;
}

.tool-sep {
  width: 3px;
  height: 32px;
  margin-left: 38px;
  background: #d3e3fd;
}

.avatar {
  width: 40px;
  height: 40px;
  margin-left: 31px;
  border-radius: 50%;
  background: #5d4037;
  color: #fff;
  font-size: 20px;
  display: flex;
  align-items: center;
  justify-content: center;
}

.kebab {
  margin-left: 49px;
  display: flex;
  flex-direction: column;
  gap: 5px;
}

.kebab i {
  width: 6px;
  height: 6px;
  border-radius: 50%;
  background: #444;
}

.viewport {
  flex: 1;
  min-height: 0;
  display: flex;
}

.page {
  flex: 1;
  min-width: 0;
  box-sizing: border-box;
  padding-top: 146px;
  display: flex;
  flex-direction: column;
  align-items: center;
}

.scrollbar {
  flex: none;
  width: 30px;
  box-sizing: border-box;
  padding: 8px 6px 0 8px;
  background: #fafafa;
  border-left: 1px solid #ececec;
}

.scroll-thumb {
  height: 208px;
  border-radius: 8px;
  background: #c1c1c1;
}

/* stepper */
.stepper {
  width: 1786px;
  height: 220px;
  flex: none;
  box-sizing: border-box;
  padding: 36px 83px 0;
  display: flex;
  align-items: flex-start;
  background: #000;
  border-radius: 26px;
  box-shadow: 0 8px 36px rgba(0, 0, 0, 0.3);
}

.step {
  width: 93px;
  flex: none;
  display: flex;
  flex-direction: column;
  align-items: center;
}

.step-circle {
  width: 93px;
  height: 93px;
  box-sizing: border-box;
  border: 5px solid #8b0000;
  border-radius: 50%;
  background: #fff;
  display: flex;
  align-items: center;
  justify-content: center;
}

.step-circle-active {
  transform: scale(1.15);
  border-color: #7a0000;
  box-shadow: 0 0 40px 4px rgba(140, 0, 0, 0.6), 0 0 90px 26px rgba(139, 0, 0, 0.35);
}

.brain {
  width: 46px;
  height: 37px;
}

.crane {
  width: 36px;
  height: 38px;
}

.ready-check {
  width: 40px;
  height: 40px;
}

.step-label {
  margin-top: 24px;
  font-size: 20px;
  line-height: 24px;
  font-weight: 500;
  color: #fff;
  white-space: nowrap;
}

.step-label-shift {
  margin-left: 12px;
}

.step-label-ready {
  color: #e6c8c8;
}

.wave {
  flex: 1;
  height: 93px;
  margin: 0 16px;
  display: flex;
  align-items: center;
  justify-content: space-between;
}

.wave i {
  width: 3.500px;
  border-radius: 2px;
  background: #8b0000;
}

/* mission panel */
.mission {
  width: 1786px;
  height: 421px;
  flex: none;
  margin-top: 41px;
  box-sizing: border-box;
  padding: 41px 36px 36px;
  background: linear-gradient(180deg, #0a0a0a 0%, #1a1a1a 100%);
  border: 1px solid rgba(255, 77, 0, 0.18);
  border-radius: 24px;
}

.mission-head {
  height: 67px;
  display: flex;
  align-items: center;
  justify-content: space-between;
}

.mission-title {
  margin: 0;
  display: flex;
  align-items: center;
  font-family: "DejaVu Sans Mono", "Liberation Mono", monospace;
  font-size: 24px;
  line-height: 30px;
  font-weight: 700;
  letter-spacing: 0.5px;
  color: #fff;
}

.title-bug {
  width: 22px;
  height: 22px;
  margin-right: 18px;
}

.mission-sub {
  margin: 14px 0 0;
  font-size: 23.400px;
  line-height: 28px;
  color: #8a8a8a;
}

.timer {
  width: 87px;
  height: 67px;
  border-radius: 34px;
  background: #ff4d00;
  color: #fff;
  font-family: "DejaVu Sans Mono", monospace;
  font-size: 24px;
  font-weight: 700;
  display: flex;
  align-items: center;
  justify-content: center;
}

.progress {
  height: 15px;
  margin-top: 41px;
  border-radius: 8px;
  background: rgba(255, 77, 0, 0.12);
}

.progress-fill {
  height: 100%;
  border-radius: 8px;
  background: linear-gradient(90deg, #ff4d00, #ff8c00);
}

.cards {
  margin-top: 36px;
  display: grid;
  grid-template-columns: repeat(3, 1fr);
  gap: 22px;
}

.card {
  height: 183px;
  box-sizing: border-box;
  padding: 38px 29px 29px;
  border: 1px solid #10b981;
  border-radius: 20px;
  background: #19261f;
  color: #10b981;
}

.card-active {
  border-color: #ff4d00;
  background: linear-gradient(100deg, #3a1f17 0%, #40211a 60%, #4d2618 100%);
  color: #fff;
}

.card-icon {
  display: block;
  width: 35px;
  height: 35px;
}

.card-icon-dim {
  opacity: 0.75;
}

.card-label {
  margin-top: 26px;
  font-size: 20px;
  line-height: 24px;
  font-weight: 500;
  letter-spacing: 0.750px;
}

.card-track {
  height: 7px;
  margin-top: 22px;
  border-radius: 4px;
  background: rgba(255, 255, 255, 0.1);
}

.card-fill {
  height: 100%;
  border-radius: 4px;
  background: #10b981;
}

.card-active .card-fill {
  background: #ff5000;
}

.stop {
  width: 1786px;
  height: 100px;
  flex: none;
  margin-top: 26px;
  padding: 0;
  border: none;
  border-radius: 20px;
  background: #800020;
  color: #fff;
  font-family: Inter, sans-serif;
  font-size: 28px;
  font-weight: 700;
  letter-spacing: 1.200px;
  box-shadow: 0 8px 32px rgba(128, 0, 32, 0.2);
}

/* dock */
.dock {
  flex: none;
  align-self: center;
  height: 98px;
  box-sizing: border-box;
  padding: 0 6px;
  display: flex;
  background: #757575;
  border-radius: 12px 12px 0 0;
}

.dock-item {
  position: relative;
  width: 80px;
  padding-top: 14px;
  display: flex;
  flex-direction: column;
  align-items: center;
}

.dock-item svg {
  width: 66px;
  height: 66px;
  flex: none;
}

.dock-item svg.wide {
  width: 80px;
}

.dock-trash {
  padding-top: 8px;
}

.dock-trash svg {
  height: 72px;
}

.dot {
  width: 8px;
  height: 8px;
  margin-top: 7px;
  border-radius: 50%;
  background: #0d0d0d;
}

.dot-off {
  background: transparent;
}

.dock-sep {
  width: 2px;
  height: 70px;
  margin: 14px 17px 0;
  background: #4a4a4a;
}

.dock-badge {
  position: absolute;
  top: 7px;
  left: 50px;
  width: 28px;
  height: 28px;
  border-radius: 50%;
  background: #f0392e;
  color: #fff;
  font-size: 18px;
  display: flex;
  align-items: center;
  justify-content: center;
}

.dock-text {
  font-family: Inter, sans-serif;
  text-anchor: middle;
  font-weight: 500;
}

.dock-light {
  font-weight: 300;
}

.dock-plain {
  font-family: Inter, sans-serif;
}
</style>
